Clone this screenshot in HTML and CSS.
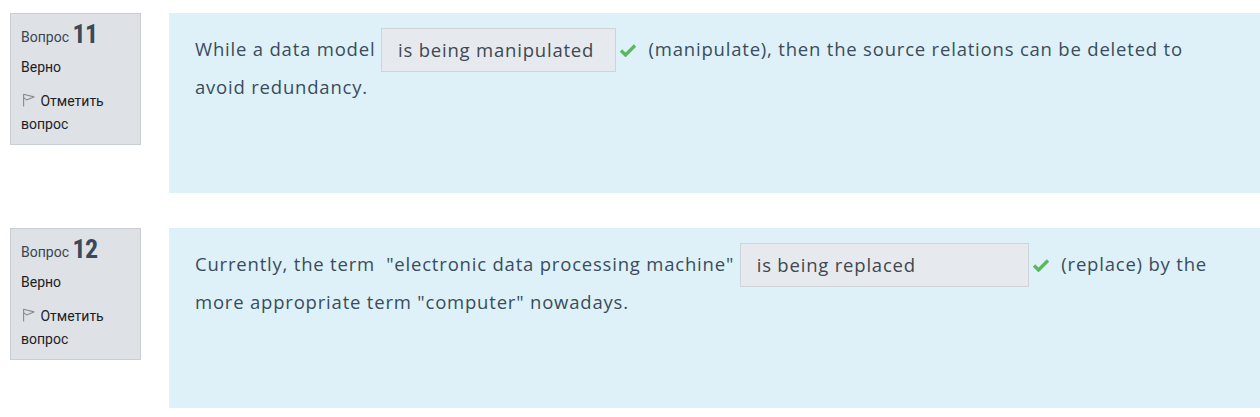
FILE: index.html
```html
<!DOCTYPE html>
<html lang="ru">
<head>
<meta charset="utf-8">
<title>Quiz</title>
<link rel="stylesheet" href="styles.css">
</head>
<body>
<div class="que">
  <div class="info">
    <h3 class="no">Вопрос <span class="qno">11</span></h3>
    <div class="state">Верно</div>
    <div class="flag"><svg class="flag-icon" width="13" height="14" viewBox="0 0 13 14"><path d="M1.6 13.5V1.3L12 3.9L4.6 6.9L2 4.9" fill="none" stroke="#8a8a8a" stroke-width="1.1" stroke-linejoin="round"/></svg> Отметить вопрос</div>
  </div>
  <div class="content">
    <p class="qtext">While a data model <span class="answer">is being manipulated</span><svg class="check" width="18" height="14" viewBox="0 0 18 14"><path d="M2 7.5L6.5 12L16 2.5" fill="none" stroke="#5cb85c" stroke-width="3.4"/></svg> (manipulate), then the source relations can be deleted to avoid redundancy.</p>
  </div>
</div>
<div class="que">
  <div class="info">
    <h3 class="no">Вопрос <span class="qno">12</span></h3>
    <div class="state">Верно</div>
    <div class="flag"><svg class="flag-icon" width="13" height="14" viewBox="0 0 13 14"><path d="M1.6 13.5V1.3L12 3.9L4.6 6.9L2 4.9" fill="none" stroke="#8a8a8a" stroke-width="1.1" stroke-linejoin="round"/></svg> Отметить вопрос</div>
  </div>
  <div class="content">
    <p class="qtext">Currently, the term &nbsp;"electronic data processing machine" <span class="answer wide">is being replaced</span><svg class="check" width="18" height="14" viewBox="0 0 18 14"><path d="M2 7.5L6.5 12L16 2.5" fill="none" stroke="#5cb85c" stroke-width="3.4"/></svg> (replace) by the more appropriate term "computer" nowadays.</p>
  </div>
</div>
</body>
</html>
```

FILE: styles.css
```css
html, body {
  margin: 0;
  padding: 0;
  background: #ffffff;
}
body {
  padding: 13px 0 0 10px;
  font-family: Roboto, "Liberation Sans", Arial, sans-serif;
}
.que {
  display: flex;
  align-items: flex-start;
  gap: 28px;
  margin-bottom: 35px;
}
.info {
  box-sizing: border-box;
  flex: 0 0 131px;
  height: 132px;
  background: #dee2e6;
  border: 1px solid #c9ced4;
  padding: 9px 10px 0 10px;
  color: #1d2125;
  font-size: 14px;
}
.no {
  margin: 0;
  font-weight: normal;
  font-size: 14px;
  line-height: 28px;
  color: #3a4550;
}
.qno {
  font-family: "Liberation Sans Narrow", "Roboto Condensed", Roboto, sans-serif;
  font-size: 26px;
  font-weight: bold;
  color: #3b4a58;
  letter-spacing: -0.5px;
  line-height: 20px;
  vertical-align: -1px;
}
.state {
  line-height: 20px;
  margin-top: 6px;
}
.flag {
  margin-top: 13px;
  line-height: 23px;
}
.flag-icon {
  vertical-align: -1px;
  margin-left: 1px;
  margin-right: 2px;
}
.content {
  box-sizing: border-box;
  flex: 1;
  height: 180px;
  background: #def1f8;
  padding: 15px 26px;
}
.qtext {
  margin: 0;
  font-family: "Open Sans", "Liberation Sans", sans-serif;
  font-size: 18.5px;
  letter-spacing: 0.8px;
  line-height: 30px;
  color: #3a4c5c;
}
.answer {
  display: inline-block;
  box-sizing: border-box;
  width: 235px;
  height: 44px;
  line-height: 42px;
  padding: 0 16px;
  background: #e6eaee;
  border: 1px solid #ced4da;
  color: #40474e;
  vertical-align: -16px;
  white-space: nowrap;
  overflow: hidden;
}
.answer.wide {
  width: 289px;
}
.check {
  margin-left: 3px;
  margin-right: 6px;
  vertical-align: -1px;
}
```
